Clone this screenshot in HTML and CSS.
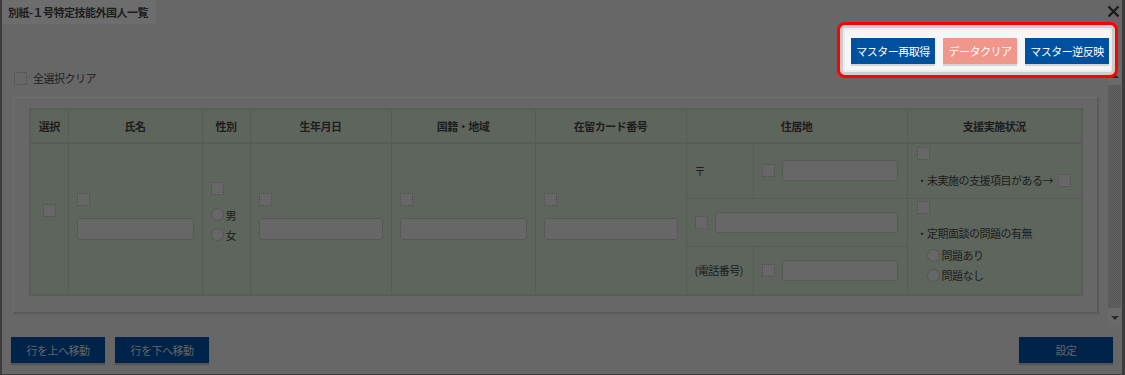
FILE: index.html
```html
<!DOCTYPE html>
<html lang="ja">
<head>
    <meta charset="UTF-8">
    <meta name="viewport" content="width=device-width, initial-scale=1.0">
    <title>別紙-１号特定技能外国人一覧</title>
    <link rel="stylesheet" href="styles.css">
</head>
<body>
    <div class="dialog">
        <div class="dialog-title">別紙-１号特定技能外国人一覧</div>
        <button type="button" class="close-btn" aria-label="閉じる">
            <svg width="13" height="13" viewBox="0 0 13 13"><path d="M1.5 1.5 L11.5 11.5 M11.5 1.5 L1.5 11.5" stroke="#1b1b1b" stroke-width="2.4"/></svg>
        </button>

        <div class="toolbar">
            <div class="actions">
                <button type="button" class="btn btn-blue">マスター再取得</button>
                <button type="button" class="btn btn-pink">データクリア</button>
                <button type="button" class="btn btn-blue">マスター逆反映</button>
            </div>
        </div>

        <div class="dialog-body">
            <div class="scroll-content">
                <label class="select-all"><input type="checkbox" class="chk">全選択クリア</label>
                <div class="panel">
                    <table class="grid">
                        <colgroup>
                            <col class="col-sel">
                            <col class="col-name">
                            <col class="col-sex">
                            <col class="col-birth">
                            <col class="col-nation">
                            <col class="col-card">
                            <col class="col-addr1">
                            <col class="col-addr2">
                            <col class="col-support">
                        </colgroup>
                        <thead>
                            <tr>
                                <th>選択</th>
                                <th>氏名</th>
                                <th>性別</th>
                                <th>生年月日</th>
                                <th>国籍・地域</th>
                                <th>在留カード番号</th>
                                <th colspan="2">住居地</th>
                                <th>支援実施状況</th>
                            </tr>
                        </thead>
                        <tbody>
                            <tr class="r1">
                                <td rowspan="3" class="c-select"><input type="checkbox" class="chk"></td>
                                <td rowspan="3" class="c-field"><input type="checkbox" class="chk"><input type="text" class="txt"></td>
                                <td rowspan="3" class="c-gender">
                                    <input type="checkbox" class="chk">
                                    <label class="radio"><input type="radio" name="sex" class="rdo">男</label>
                                    <label class="radio"><input type="radio" name="sex" class="rdo">女</label>
                                </td>
                                <td rowspan="3" class="c-field"><input type="checkbox" class="chk"><input type="text" class="txt"></td>
                                <td rowspan="3" class="c-field"><input type="checkbox" class="chk"><input type="text" class="txt"></td>
                                <td rowspan="3" class="c-field"><input type="checkbox" class="chk"><input type="text" class="txt"></td>
                                <td class="c-label">〒</td>
                                <td class="c-addr"><div class="inline-field"><input type="checkbox" class="chk"><input type="text" class="txt"></div></td>
                                <td class="c-support">
                                    <input type="checkbox" class="chk">
                                    <div class="support-line"><span>・未実施の支援項目がある→</span><input type="checkbox" class="chk"></div>
                                </td>
                            </tr>
                            <tr class="r2">
                                <td colspan="2" class="c-addr"><div class="inline-field wide"><input type="checkbox" class="chk"><input type="text" class="txt"></div></td>
                                <td rowspan="2" class="c-support second">
                                    <input type="checkbox" class="chk">
                                    <div class="support-line"><span>・定期面談の問題の有無</span></div>
                                    <label class="radio"><input type="radio" name="issue" class="rdo">問題あり</label>
                                    <label class="radio"><input type="radio" name="issue" class="rdo">問題なし</label>
                                </td>
                            </tr>
                            <tr class="r3">
                                <td class="c-label">(電話番号)</td>
                                <td class="c-addr"><div class="inline-field"><input type="checkbox" class="chk"><input type="text" class="txt"></div></td>
                            </tr>
                        </tbody>
                    </table>
                </div>
            </div>
            <div class="scrollbar">
                <div class="sb-btn sb-up"></div>
                <div class="sb-track"></div>
                <div class="sb-btn sb-down"></div>
            </div>
        </div>

        <div class="dialog-foot">
            <div class="foot-left">
                <button type="button" class="btn btn-navy">行を上へ移動</button>
                <button type="button" class="btn btn-navy">行を下へ移動</button>
            </div>
            <button type="button" class="btn btn-navy">設定</button>
        </div>
    </div>
</body>
</html>
```

FILE: styles.css
```css
* {
    margin: 0;
    padding: 0;
    box-sizing: border-box;
}
body {
    font-family: "Noto Sans CJK JP", "Noto Sans", sans-serif;
    font-size: 11px;
    letter-spacing: -0.5px;
    color: #1d1d1d;
    background-color: #3c3c3c;
}
.dialog {
    position: relative;
    width: 1121px;
    height: 375px;
    margin-left: 2px;
    background-color: #676767;
    border-right: 1px solid #3a3a3a;
    border-bottom: 1px solid #3a3a3a;
}
.dialog-title {
    display: inline-block;
    height: 24px;
    line-height: 24px;
    padding: 0 8px 0 6px;
    background-color: #6d6d6d;
    font-weight: bold;
}
.close-btn {
    position: absolute;
    top: 5px;
    right: 2px;
    width: 13px;
    height: 13px;
    border: none;
    background: none;
}
.close-btn svg {
    display: block;
}

/* top buttons, highlighted */
.toolbar {
    display: flex;
    justify-content: flex-end;
    margin-top: 14px;
    padding-right: 13px;
}
.actions {
    position: relative;
    z-index: 1;
    display: flex;
    gap: 8px;
}
.actions::before {
    content: "";
    position: absolute;
    top: -16px;
    bottom: -14px;
    left: -14px;
    right: -9px;
    z-index: -1;
    border: 3px solid #ff0000;
    border-radius: 8px;
    background-color: #f6f6f6;
    box-shadow: inset 0 0 0 3px #cdcdcd, inset 0 0 0 5px #ececec;
}
.btn {
    height: 26px;
    border: none;
    font-family: inherit;
    font-size: 11px;
    letter-spacing: -0.5px;
    white-space: nowrap;
    color: #ffffff;
    padding: 0;
}
.btn-blue {
    width: 84px;
    background-color: #0050a0;
    box-shadow: 0 2px 0 #d4d4d4;
}
.btn-pink {
    width: 74px;
    background-color: #f0968a;
    box-shadow: 0 2px 0 #d4d4d4;
}
.btn-navy {
    width: 94px;
    background-color: #00234a;
    color: #666666;
    box-shadow: 0 2px 1px #555555;
}

/* body + fake scrollbar */
.dialog-body {
    display: flex;
    height: 261px;
    margin-top: 2px;
}
.scroll-content {
    flex: 1;
    padding: 5px 10px 0 11px;
}
.select-all {
    display: flex;
    align-items: center;
    gap: 6px;
    height: 14px;
    padding-left: 1px;
}
.panel {
    margin-top: 12px;
    padding: 10px 14px 16px 15px;
    border-top: 1px solid #707070;
    border-left: 1px solid #6d6d6d;
    border-right: 1px solid #575757;
    border-bottom: 1px dotted #4e4e4e;
    box-shadow: 1px 1px 1px #5a5a5a;
}
.scrollbar {
    display: flex;
    flex-direction: column;
    width: 13px;
    margin-right: 1px;
}
.sb-btn {
    position: relative;
    height: 19px;
    background-color: #6a6a6a;
}
.sb-track {
    flex: 1;
    background: repeating-conic-gradient(#565656 0 25%, #626262 0 50%) 0 0 / 2px 2px;
}
.sb-down::after,
.sb-up::after {
    content: "";
    position: absolute;
    left: 3px;
    top: 8px;
    border-left: 4px solid transparent;
    border-right: 4px solid transparent;
    border-top: 4px solid #2a2a2a;
}
.sb-up::after {
    border-top: none;
    border-bottom: 4px solid #2a2a2a;
}

/* table */
.grid {
    width: 1052px;
    height: 186px;
    border-collapse: collapse;
    table-layout: fixed;
    background-color: #5e655c;
    border: 2px solid #585e57;
}
.col-sel { width: 38px; }
.col-name { width: 134px; }
.col-sex { width: 48px; }
.col-birth { width: 141px; }
.col-nation { width: 144px; }
.col-card { width: 151px; }
.col-addr1 { width: 67px; }
.col-addr2 { width: 154px; }
.col-support { width: 175px; }
.grid th,
.grid td {
    border: 1px solid #575d56;
}
.grid th {
    height: 34px;
    font-weight: bold;
    text-align: center;
    border-bottom-width: 2px;
}
.r1 { height: 55px; }
.r2 { height: 48px; }
.r3 { height: 49px; }

.chk,
.rdo {
    appearance: none;
    display: block;
    width: 13px;
    height: 13px;
    background-color: #676767;
    border: 1px dotted #4c4c4c;
    flex-shrink: 0;
}
.rdo {
    border: 1px solid #555555;
    border-radius: 50%;
}
.txt {
    display: block;
    width: 100%;
    height: 22px;
    background-color: #676767;
    border: 1px solid #585858;
    border-radius: 3px;
}
.c-select {
    text-align: center;
    vertical-align: middle;
}
.c-select .chk {
    margin: 0 auto 18px;
}
.c-field {
    vertical-align: middle;
    padding: 0 8px 6px 8px;
}
.c-field .chk {
    margin-bottom: 12px;
}
.c-gender {
    vertical-align: middle;
    padding: 0 0 8px 8px;
}
.c-gender .chk {
    margin-bottom: 13px;
}
.radio {
    display: flex;
    align-items: center;
    gap: 2px;
    height: 13px;
    margin-bottom: 7px;
}
.c-label {
    padding-left: 8px;
    vertical-align: middle;
}
.c-addr {
    vertical-align: middle;
}
.inline-field {
    display: flex;
    align-items: center;
    gap: 7px;
    padding: 0 9px 0 8px;
}
.inline-field .txt {
    height: 21px;
}
.c-support {
    vertical-align: top;
    padding: 3px 0 0 9px;
}
.c-support.second {
    padding-top: 2px;
}
.support-line {
    display: flex;
    align-items: center;
    gap: 5px;
    height: 14px;
    margin-top: 13px;
}
.second .support-line {
    margin-top: 12px;
    margin-bottom: 9px;
}
.second .radio {
    margin-left: 10px;
}

/* footer */
.dialog-foot {
    display: flex;
    justify-content: space-between;
    margin-top: 10px;
    padding: 0 9px;
}
.foot-left {
    display: flex;
    gap: 10px;
}
```
